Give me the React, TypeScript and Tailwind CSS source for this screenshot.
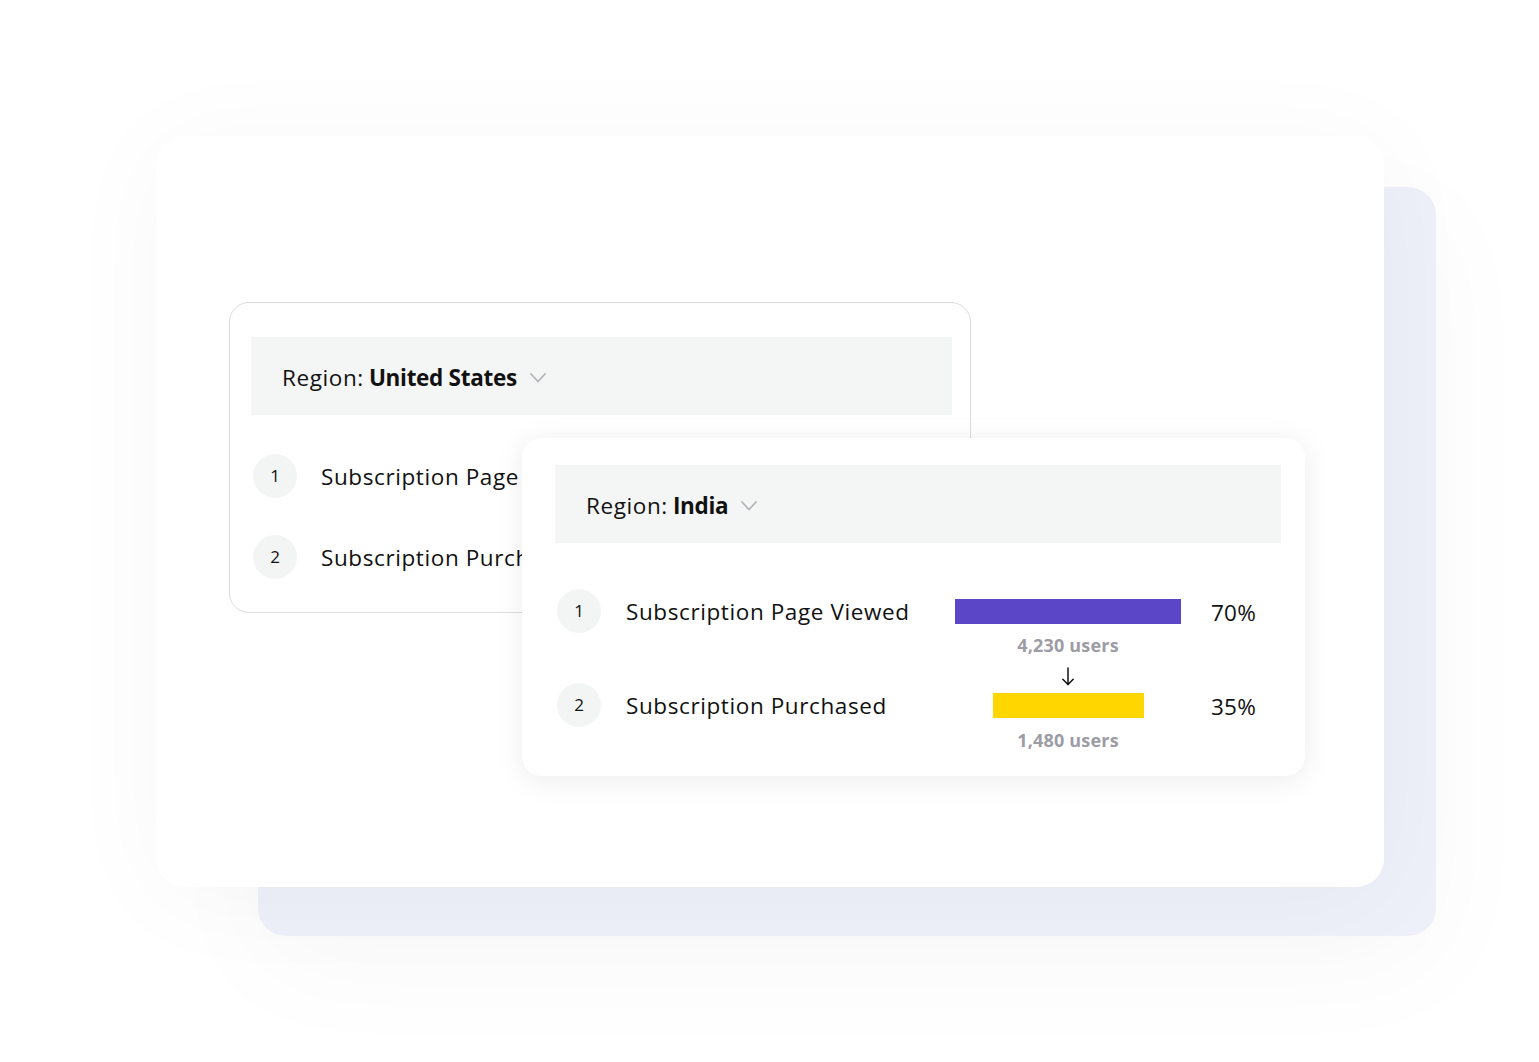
import React from "react";

function Chevron() {
  return (
    <svg width="18" height="12" viewBox="0 0 18 12" className="ml-[12px] shrink-0 mt-[1px]">
      <polyline points="2,2 9,9.5 16,2" fill="none" stroke="#b4b4b8" strokeWidth="1.8" strokeLinecap="round" strokeLinejoin="round" />
    </svg>
  );
}

function Step({ n }: { n: number }) {
  return (
    <div className="w-[44px] h-[44px] rounded-full bg-[#f3f4f4] flex items-center justify-center text-[17px] text-[#111] shrink-0">
      {n}
    </div>
  );
}

function DownArrow() {
  return (
    <svg width="14" height="19" viewBox="0 0 14 19">
      <line x1="7" y1="1" x2="7" y2="17.5" stroke="#111" strokeWidth="1.5" strokeLinecap="round" />
      <polyline points="1.8,12.3 7,17.5 12.2,12.3" fill="none" stroke="#111" strokeWidth="1.5" strokeLinecap="round" strokeLinejoin="round" />
    </svg>
  );
}

export default function App() {
  return (
    <div className="w-[1539px] h-[1062px] bg-white overflow-hidden pt-[136px] pl-[156px] font-['Open_Sans',sans-serif] text-[#111]">
      <div className="relative w-[1280px] h-[800px]">
        <div className="absolute left-[102px] top-[51px] w-[1178px] h-[749px] rounded-[28px] bg-[#edf0f8] shadow-[0_30px_120px_rgba(0,0,0,0.03)]" />
        <div className="relative w-[1228px] h-[751px] rounded-[28px] bg-white shadow-[0_10px_110px_rgba(0,0,0,0.035)] pt-[166px] pl-[73px]">
          {/* Card United States */}
          <div className="w-[742px] h-[311px] rounded-[20px] border border-[#dcdcdc] bg-white pt-[34px] pl-[21px]">
            <div className="w-[701px] h-[78px] bg-[#f4f5f5] flex items-center pl-[31px] pt-[3px] text-[22.5px] tracking-[0.6px]">
              <span>Region:</span>
              <span className="font-bold ml-[5px] tracking-[-0.3px]">United States</span>
              <Chevron />
            </div>
            <div className="pl-[2px] mt-[39px] flex flex-col gap-[37px]">
              <div className="flex items-center h-[44px]">
                <Step n={1} />
                <span className="ml-[24px] pt-[2px] text-[22.5px] tracking-[0.6px] whitespace-nowrap">Subscription Page Viewed</span>
              </div>
              <div className="flex items-center h-[44px]">
                <Step n={2} />
                <span className="ml-[24px] pt-[2px] text-[22.5px] tracking-[0.6px] whitespace-nowrap">Subscription Purchased</span>
              </div>
            </div>
          </div>

          {/* Card India */}
          <div className="relative z-10 -mt-[175px] ml-[293px] w-[783px] h-[338px] rounded-[20px] bg-white shadow-[0_4px_30px_rgba(0,0,0,0.08)] pt-[27px] pl-[33px]">
            <div className="w-[726px] h-[78px] bg-[#f4f5f5] flex items-center pl-[31px] pt-[3px] text-[22.5px] tracking-[0.6px]">
              <span>Region:</span>
              <span className="font-bold ml-[5px] tracking-[-0.3px]">India</span>
              <Chevron />
            </div>
            <div className="pl-[2px] mt-[46px]">
              <div className="flex items-center h-[44px]">
                <Step n={1} />
                <span className="ml-[25px] w-[314px] pt-[2px] text-[22.5px] tracking-[0.6px] whitespace-nowrap">Subscription Page Viewed</span>
                <div className="w-[256px] flex justify-center">
                  <div className="w-[226px] h-[25px] bg-[#5a46c6]" />
                </div>
                <span className="ml-[15px] pt-[3px] text-[22.5px] tracking-[0.2px]">70%</span>
              </div>
              <div className="ml-[383px] w-[256px] h-[24px] leading-[24px] text-center text-[18px] tracking-[0.2px] font-bold text-[#9c9ca5]">
                4,230 users
              </div>
              <div className="ml-[383px] w-[256px] h-[26px] flex justify-center pt-[10px]">
                <DownArrow />
              </div>
              <div className="flex items-center h-[44px]">
                <Step n={2} />
                <span className="ml-[25px] w-[314px] pt-[2px] text-[22.5px] tracking-[0.6px] whitespace-nowrap">Subscription Purchased</span>
                <div className="w-[256px] flex justify-center">
                  <div className="w-[151px] h-[25px] bg-[#ffd600]" />
                </div>
                <span className="ml-[15px] pt-[3px] text-[22.5px] tracking-[0.2px]">35%</span>
              </div>
              <div className="ml-[383px] mt-[1px] w-[256px] h-[24px] leading-[24px] text-center text-[18px] tracking-[0.2px] font-bold text-[#9c9ca5]">
                1,480 users
              </div>
            </div>
          </div>
        </div>
      </div>
    </div>
  );
}
